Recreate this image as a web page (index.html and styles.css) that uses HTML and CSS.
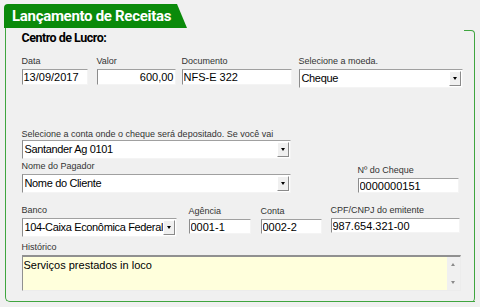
FILE: index.html
```html
<!DOCTYPE html>
<html lang="pt-BR">
<head>
    <meta charset="UTF-8">
    <title>Lançamento de Receitas</title>
    <link rel="stylesheet" href="styles.css">
</head>
<body>
    <div class="form">
        <div class="tab">Lançamento de Receitas</div>
        <div class="box">
            <div class="section">Centro de Lucro:</div>

            <div class="row r1">
                <div class="field w-data">
                    <label>Data</label>
                    <input type="text" value="13/09/2017">
                </div>
                <div class="field w-valor">
                    <label>Valor</label>
                    <input type="text" class="num" value="600,00">
                </div>
                <div class="field w-doc">
                    <label>Documento</label>
                    <input type="text" value="NFS-E 322">
                </div>
                <div class="field w-moeda">
                    <label>Selecione a moeda.</label>
                    <div class="select"><span class="val">Cheque</span><span class="drop"></span></div>
                </div>
            </div>

            <div class="row r2">
                <div class="field w-conta">
                    <label class="tight">Selecione a conta onde o cheque será depositado. Se você vai</label>
                    <div class="select"><span class="val">Santander Ag 0101</span><span class="drop"></span></div>
                </div>
            </div>

            <div class="row r3">
                <div class="field w-conta">
                    <label>Nome do Pagador</label>
                    <div class="select"><span class="val">Nome do Cliente</span><span class="drop"></span></div>
                </div>
                <div class="field w-cheque">
                    <label>Nº do Cheque</label>
                    <input type="text" class="small" value="0000000151">
                </div>
            </div>

            <div class="row r4">
                <div class="field w-banco">
                    <label>Banco</label>
                    <div class="select"><span class="val">104-Caixa Econômica Federal</span><span class="drop"></span></div>
                </div>
                <div class="field w-agencia low">
                    <label>Agência</label>
                    <input type="text" class="small" value="0001-1">
                </div>
                <div class="field w-cc low">
                    <label>Conta</label>
                    <input type="text" class="small" value="0002-2">
                </div>
                <div class="field w-cpf">
                    <label>CPF/CNPJ do emitente</label>
                    <input type="text" class="small" value="987.654.321-00">
                </div>
            </div>

            <div class="row r5">
                <div class="field w-hist">
                    <label>Histórico</label>
                    <div class="memo">
                        <div class="memo-text">Serviços prestados in loco</div>
                        <div class="scroll"><span class="up"></span><span class="down"></span></div>
                    </div>
                </div>
            </div>
        </div>
    </div>
</body>
</html>
```

FILE: styles.css
```css
* {
    box-sizing: border-box;
}

body {
    margin: 0;
    background: #f0f0f0;
    font-family: "Liberation Sans", Arial, sans-serif;
    color: #000;
}

.form {
    margin: 4px 0 0 4px;
    width: 472px;
}

.tab {
    width: 183px;
    height: 24px;
    padding-left: 8px;
    background: #0a8a0a;
    color: #fff;
    font-family: Roboto, sans-serif;
    font-weight: bold;
    font-size: 15px;
    letter-spacing: -0.3px;
    line-height: 25px;
    white-space: nowrap;
    border-top-left-radius: 4px;
    clip-path: polygon(0 0, 173px 0, 183px 100%, 0 100%);
}

.box {
    position: relative;
    margin-left: 1px;
    width: 470px;
    padding: 2px 0 10px 15.5px;
    border-left: 1.5px solid #3fa53f;
    border-bottom: 1.5px solid #3fa53f;
    border-bottom-left-radius: 5px;
}

.box::before {
    content: "";
    position: absolute;
    top: 2px;
    right: 0;
    bottom: -1.5px;
    width: 10px;
    border-top: 1.5px solid #3fa53f;
    border-right: 1.5px solid #3fa53f;
    border-bottom: 1.5px solid #3fa53f;
    border-radius: 0 4px 5px 0;
}

.section {
    font-family: Roboto, sans-serif;
    font-weight: bold;
    font-size: 12.5px;
    letter-spacing: -0.5px;
    line-height: 15px;
}

.row {
    display: flex;
    align-items: flex-start;
}

.r1 { margin-top: 11px; }
.r2 { margin-top: 41px; }
.r3 { margin-top: 2px; align-items: flex-end; }
.r4 { margin-top: 12px; }
.r5 { margin-top: 5px; }

label {
    display: block;
    font-size: 9px;
    line-height: 11px;
    color: #333;
    margin-bottom: 2px;
    white-space: nowrap;
}

label.tight {
    margin-bottom: 0;
}

.low {
    margin-top: 1px;
}

input {
    display: block;
    width: 100%;
    height: 16px;
    padding: 0 1px;
    border: 1px solid;
    border-color: #a0a0a0 #f4f4f4 #f4f4f4 #8c8c8c;
    background: #fff;
    font-family: "Liberation Sans", Arial, sans-serif;
    font-size: 11px;
    color: #000;
    outline: none;
}

input.small {
    height: 15px;
}

input.num {
    text-align: right;
}

.select {
    display: flex;
    height: 19px;
    border: 1px solid;
    border-color: #a0a0a0 #f4f4f4 #f4f4f4 #8c8c8c;
    background: #fff;
    font-size: 11px;
    line-height: 17px;
}

.select .val {
    flex: 1;
    min-width: 0;
    padding-left: 2px;
    letter-spacing: -0.35px;
    overflow: hidden;
    white-space: nowrap;
}

.select .drop {
    display: flex;
    align-items: center;
    justify-content: center;
    width: 12px;
    margin: 1px 1px 1px 0;
    background: #f0f0f0;
    border: 1px solid;
    border-color: #fff #8a8a8a #8a8a8a #fff;
}

.select .drop::after {
    content: "";
    border-left: 2.5px solid transparent;
    border-right: 2.5px solid transparent;
    border-top: 3px solid #000;
}

.w-data { width: 66px; }
.w-valor { width: 79px; margin-left: 9px; }
.w-doc { width: 110px; margin-left: 6px; }
.w-moeda { width: 164px; margin-left: 7px; }
.w-conta { width: 269px; }
.w-cheque { width: 101px; margin-left: 67px; }
.w-banco { width: 155px; }
.w-agencia { width: 62px; margin-left: 12px; }
.w-cc { width: 61px; margin-left: 10px; }
.w-cpf { width: 129px; margin-left: 9px; }
.w-hist { width: 439px; }

.memo {
    display: flex;
    height: 36px;
    border-top: 2px solid #909090;
    border-left: 1px solid #909090;
    border-right: 1px solid #ececec;
    border-bottom: 1px solid #ececec;
    background: #ffffdc;
}

.memo-text {
    flex: 1;
    padding: 2px 1px;
    font-size: 11px;
    line-height: 13px;
}

.scroll {
    display: flex;
    flex-direction: column;
    justify-content: space-between;
    align-items: center;
    width: 13px;
    padding: 6px 0 6px;
    background: #f0f0f0;
}

.scroll .up {
    border-left: 2.5px solid transparent;
    border-right: 2.5px solid transparent;
    border-bottom: 3px solid #8a8a8a;
}

.scroll .down {
    border-left: 2.5px solid transparent;
    border-right: 2.5px solid transparent;
    border-top: 3px solid #8a8a8a;
}
```
